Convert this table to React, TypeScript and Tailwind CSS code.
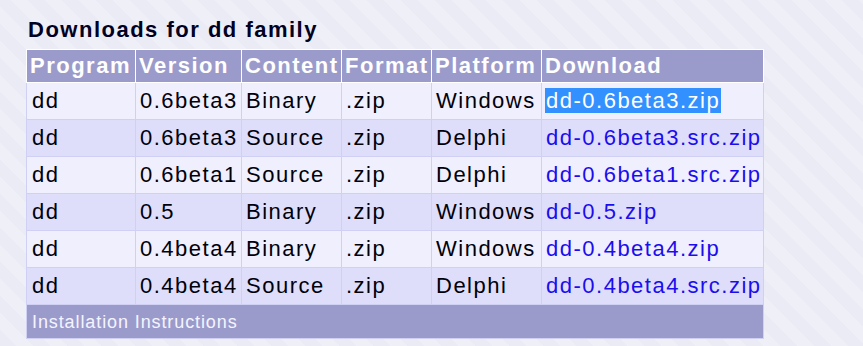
const rows = [
  { program: "dd", version: "0.6beta3", content: "Binary", format: ".zip", platform: "Windows", file: "dd-0.6beta3.zip" },
  { program: "dd", version: "0.6beta3", content: "Source", format: ".zip", platform: "Delphi", file: "dd-0.6beta3.src.zip" },
  { program: "dd", version: "0.6beta1", content: "Source", format: ".zip", platform: "Delphi", file: "dd-0.6beta1.src.zip" },
  { program: "dd", version: "0.5", content: "Binary", format: ".zip", platform: "Windows", file: "dd-0.5.zip" },
  { program: "dd", version: "0.4beta4", content: "Binary", format: ".zip", platform: "Windows", file: "dd-0.4beta4.zip" },
  { program: "dd", version: "0.4beta4", content: "Source", format: ".zip", platform: "Delphi", file: "dd-0.4beta4.src.zip" },
];

const headers = ["Program", "Version", "Content", "Format", "Platform", "Download"];

export default function App() {
  return (
    <div
      className="w-[863px] h-[346px] overflow-hidden bg-[repeating-linear-gradient(45deg,#ebebf5_0px,#ebebf5_12px,#efeff8_12px,#efeff8_24px)] pt-[15px] pl-[26px] text-[#00000a] tracking-[1.5px]"
      style={{ fontFamily: '"Liberation Sans", Arial, sans-serif' }}
    >
      <h2 className="text-[22px] leading-[30px] font-bold pl-[2px] mb-[4px] text-[#000022]">Downloads for dd family</h2>
      <table className="border-collapse table-fixed w-[737px] text-[22px] leading-[26px]">
        <colgroup>
          <col className="w-[109px]" />
          <col className="w-[106px]" />
          <col className="w-[100px]" />
          <col className="w-[90px]" />
          <col className="w-[110px]" />
          <col className="w-[222px]" />
        </colgroup>
        <thead>
          <tr className="bg-[#9b9bcb]">
            {headers.map((h) => (
              <th
                key={h}
                className="border border-white pl-[3px] pr-0 pt-[3px] pb-[3px] text-left font-bold text-white whitespace-nowrap overflow-hidden"
              >
                {h}
              </th>
            ))}
          </tr>
        </thead>
        <tbody>
          {rows.map((r, i) => (
            <tr key={r.file} className={i % 2 === 0 ? "bg-[#efeffd]" : "bg-[#dedefa]"}>
              <td className="border border-[#d0d0f4] pl-[5px] py-[5px] whitespace-nowrap">{r.program}</td>
              <td className="border border-[#d0d0f4] pl-[4px] py-[5px] whitespace-nowrap">{r.version}</td>
              <td className="border border-[#d0d0f4] pl-[4px] py-[5px] whitespace-nowrap">{r.content}</td>
              <td className="border border-[#d0d0f4] pl-[4px] py-[5px] whitespace-nowrap">{r.format}</td>
              <td className="border border-[#d0d0f4] pl-[4px] py-[5px] whitespace-nowrap">{r.platform}</td>
              <td className="border border-[#d0d0f4] pl-[3px] py-[5px] whitespace-nowrap">
                <a
                  href="#"
                  className={
                    i === 0
                      ? "bg-[#3390ff] text-white px-[1px]"
                      : "text-[#1a0dee] px-[1px]"
                  }
                >
                  {r.file}
                </a>
              </td>
            </tr>
          ))}
          <tr className="bg-[#9b9bcb]">
            <td
              colSpan={6}
              className="border border-[#d0d0f4] pl-[5px] pt-[6px] pb-[5px] text-[18px] leading-[22px] tracking-[0.9px] text-[#f4f4ff]"
            >
              Installation Instructions
            </td>
          </tr>
        </tbody>
      </table>
    </div>
  );
}
